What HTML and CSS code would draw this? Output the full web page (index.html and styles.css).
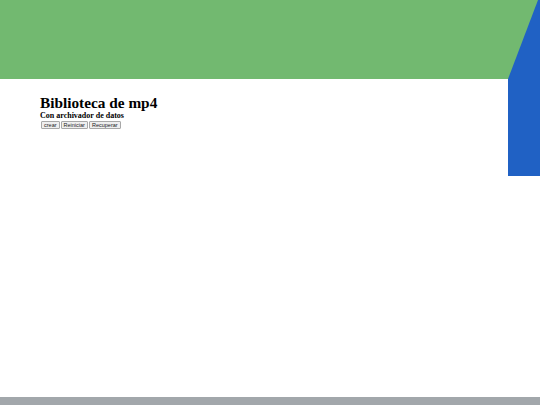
FILE: index.html
```html
<!DOCTYPE html>
<html lang="es">
<head>
<meta charset="utf-8">
<title>Biblioteca de mp4</title>
<link rel="stylesheet" href="styles.css">
</head>
<body>
<header class="banner"></header>
<div class="accent"></div>
<main class="content">
  <h1 class="title">Biblioteca de mp4</h1>
  <h2 class="subtitle">Con archivador de datos</h2>
  <div class="actions">
    <button class="btn">crear</button>
    <button class="btn">Reiniciar</button>
    <button class="btn">Recuperar</button>
  </div>
</main>
<footer class="footer"></footer>
</body>
</html>
```
FILE: styles.css
```css
html, body {
  margin: 0;
  padding: 0;
  height: 100%;
}
body {
  position: relative;
  background: #ffffff;
  font-family: "Liberation Serif", "Times New Roman", serif;
  overflow: hidden;
}
.banner {
  height: 79px;
  background: #72b970;
}
.accent {
  position: absolute;
  top: 0;
  right: 0;
  width: 32px;
  height: 176px;
  background: #2061c4;
  clip-path: polygon(30px 0, 32px 0, 32px 176px, 0 176px, 0 79px);
}
.content {
  padding: 15px 0 0 40px;
}
.title {
  margin: 0;
  font-size: 15.3px;
  line-height: 17px;
  font-weight: bold;
  color: #000;
}
.subtitle {
  margin: 0;
  font-size: 8px;
  line-height: 9px;
  font-weight: bold;
  color: #000;
}
.actions {
  display: flex;
  gap: 1px;
  margin: 1px 0 0 1px;
}
.btn {
  font-family: "Liberation Sans", Arial, sans-serif;
  font-size: 5.5px;
  line-height: 6px;
  height: 8px;
  padding: 0 2px;
  margin: 0;
  border: 1px solid #a8a8a8;
  border-radius: 1px;
  background: #efefef;
  color: #222;
}
.footer {
  position: absolute;
  left: 0;
  right: 0;
  bottom: 0;
  height: 8px;
  background: #a2a7ab;
}
```
